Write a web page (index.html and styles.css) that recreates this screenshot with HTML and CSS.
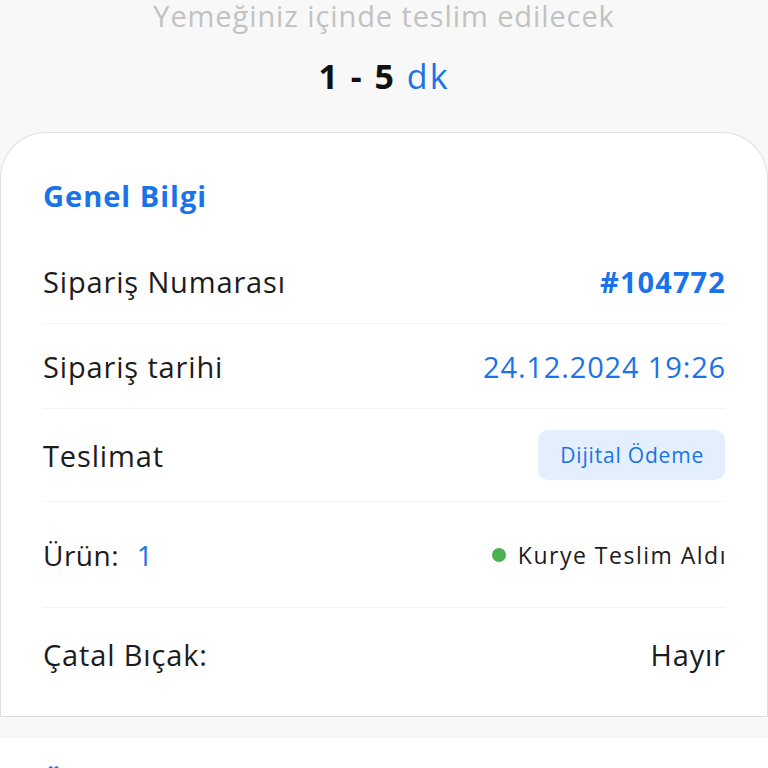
FILE: index.html
```html
<!DOCTYPE html>
<html lang="tr">
<head>
<meta charset="utf-8">
<link rel="stylesheet" href="styles.css">
</head>
<body>
<div class="eta">
  <div class="eta-sub">Yemeğiniz içinde teslim edilecek</div>
  <div class="eta-time"><b>1 - 5</b> <span class="unit">dk</span></div>
</div>
<section class="card">
  <h2 class="card-title">Genel Bilgi</h2>
  <div class="row r1">
    <span class="label">Sipariş Numarası</span>
    <span class="order-no">#104772</span>
  </div>
  <div class="row r2">
    <span class="label">Sipariş tarihi</span>
    <span class="date">24.12.2024 19:26</span>
  </div>
  <div class="row r3">
    <span class="label">Teslimat</span>
    <span class="badge">Dijital Ödeme</span>
  </div>
  <div class="row r4">
    <span class="label urun">Ürün: <span class="count">1</span></span>
    <span class="status"><span class="dot"></span>Kurye Teslim Aldı</span>
  </div>
  <div class="row r5">
    <span class="label">Çatal Bıçak:</span>
    <span class="value">Hayır</span>
  </div>
</section>
<div class="spacer"></div>
<section class="card2">
  <h2 class="card-title">Ödeme Bilgisi</h2>
</section>
</body>
</html>
```

FILE: styles.css
```css
html, body {
  margin: 0;
  padding: 0;
}
body {
  background: #f8f8f8;
  font-family: "Open Sans", "Noto Sans", sans-serif;
  color: #1c1c1c;
  width: 768px;
  height: 768px;
  overflow: hidden;
}
.eta {
  text-align: center;
}
.eta-sub {
  font-size: 29px;
  line-height: 32px;
  color: #c2c2c2;
  letter-spacing: 0.9px;
}
.eta-time {
  margin-top: 24px;
  font-size: 34px;
  line-height: 40px;
  color: #111;
  letter-spacing: 2px;
}
.eta-time b {
  font-weight: 700;
}
.eta-time .unit {
  color: #1a73e8;
  font-weight: 400;
}
.card {
  margin-top: 36px;
  background: #fff;
  border: 1px solid #dedede;
  border-bottom: 1px solid #dcdcdc;
  border-radius: 46px 46px 0 0;
  padding: 43px 42px 16px 42px;
}
.card-title {
  margin: 0;
  font-size: 29px;
  line-height: 40px;
  font-weight: 700;
  color: #1a73e8;
  letter-spacing: 1px;
}
.row {
  display: flex;
  align-items: center;
  justify-content: space-between;
  font-size: 29px;
  letter-spacing: 0.85px;
  border-bottom: 1px solid #f3f3f3;
}
.r1 { margin-top: 24px; height: 83px; }
.r2 { height: 84px; }
.r3 { height: 92px; }
.r4 { height: 105px; }
.r5 { height: 92px; border-bottom: none; }
.label {
  color: #1c1c1c;
}
.urun {
  font-size: 28px;
  letter-spacing: 0.5px;
}
.count {
  color: #1a73e8;
  margin-left: 10px;
}
.order-no {
  font-weight: 700;
  color: #1a73e8;
  letter-spacing: 1.1px;
  margin-right: -1px;
}
.date {
  color: #1a73e8;
  margin-right: -1px;
}
.badge {
  background: #e3effc;
  color: #1a73e8;
  font-size: 21px;
  letter-spacing: 0.8px;
  line-height: 50px;
  padding: 0 21px 0 22px;
  border-radius: 10px;
}
.status {
  display: flex;
  align-items: center;
  font-size: 23px;
  letter-spacing: 1.5px;
  color: #1c1c1c;
  margin-right: -2px;
}
.dot {
  width: 14px;
  height: 14px;
  border-radius: 50%;
  background: #4caf50;
  margin-right: 12px;
}
.value {
  color: #1c1c1c;
  margin-right: -1px;
}
.spacer {
  height: 21px;
  background: #f8f8f8;
}
.card2 {
  background: #fff;
  padding: 24px 42px 40px;
}
```
